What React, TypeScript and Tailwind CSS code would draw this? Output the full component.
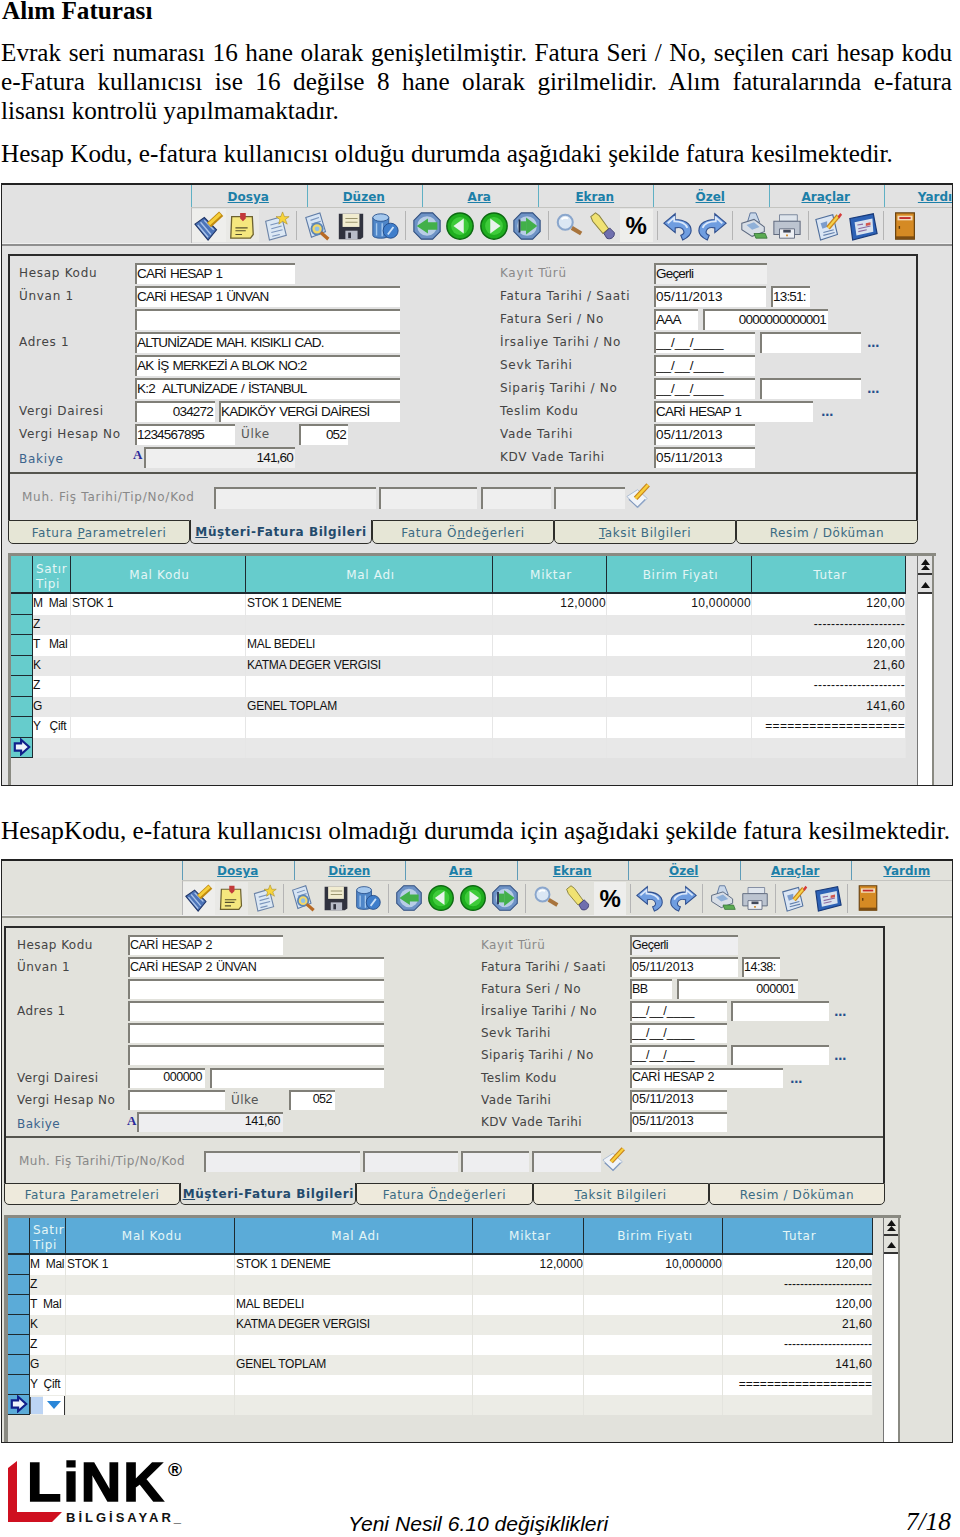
import React from "react";

type Field = { w: string; t?: string; right?: boolean; ro?: boolean; ml?: string };
type Row = { l: string; c?: string; f: Field[]; lead?: React.ReactNode; dots?: string; ulke?: string };

const Svg = ({ c, children }: { c: string; children: React.ReactNode }) => (
  <svg viewBox="0 0 32 32" className={c}>{children}</svg>
);

const icons: ((c: string) => React.ReactNode)[] = [
  // broom
  (c) => (
    <Svg c={c}>
      <path d="M1 14 L11 7 L24 20 L15 31 Z" fill="#4c74b8" stroke="#1f3569" strokeWidth="1.2" />
      <path d="M4 15 L15 28 M7 12 L18 25 M11 10 L21 20" stroke="#a9c3ea" strokeWidth="1.5" />
      <path d="M16 15 L29 3" stroke="#c08a10" strokeWidth="6.5" />
      <path d="M16 14 L28 3" stroke="#f6cf3a" strokeWidth="3.4" />
    </Svg>
  ),
  // note
  (c) => (
    <Svg c={c}>
      <path d="M5 6 H27 L28 25 L25 29 H4 Z" fill="#f5e77e" stroke="#6d6230" strokeWidth="1.4" />
      <path d="M14 2 H20 V8 L17 11 L14 8 Z" fill="#c23a3a" />
      <path d="M9 18 H22 M9 21 H20 M9 25 H16" stroke="#55502c" strokeWidth="1.2" />
    </Svg>
  ),
  // doc with star
  (c) => (
    <Svg c={c}>
      <path d="M5 11 L22 6 L27 26 L9 31 Z" fill="#dce8f4" stroke="#6c84a8" strokeWidth="1.2" />
      <path d="M10 15 L21 12 M11 19 L22 16 M11 23 L23 20 M12 27 L20 25" stroke="#7a94bc" strokeWidth="1.2" />
      <path d="M23 1 L25 6 L30 6 L26 9 L28 14 L23 11 L19 14 L20 9 L16 6 L21 6 Z" fill="#f7d43c" stroke="#a98a1c" strokeWidth="0.6" />
    </Svg>
  ),
  // doc + magnifier
  (c) => (
    <Svg c={c}>
      <path d="M3 7 L18 2 L24 22 L9 28 Z" fill="#d6e4f4" stroke="#5f7ca6" strokeWidth="1.2" />
      <path d="M8 10 L17 7 M9 14 L19 11" stroke="#7a94bc" strokeWidth="1.2" />
      <circle cx="15" cy="19" r="6" fill="#f2d768" stroke="#5b86b8" strokeWidth="2" />
      <circle cx="15" cy="19" r="2.6" fill="#8fc0e8" />
      <path d="M19 23 L27 30" stroke="#b86a24" strokeWidth="3.6" />
    </Svg>
  ),
  // floppy
  (c) => (
    <Svg c={c}>
      <path d="M3 3 H29 V28 L26 30 H3 Z" fill="#30323e" />
      <path d="M7 3 H25 V17 H7 Z" fill="#f1ecd0" />
      <path d="M10 8 H23 M10 12 H23" stroke="#9a946e" strokeWidth="1.2" />
      <path d="M10 21 H23 V30 H10 Z" fill="#b8bcc8" />
      <path d="M13 23 H16 V29 H13 Z" fill="#30323e" />
    </Svg>
  ),
  // database + shield
  (c) => (
    <Svg c={c}>
      <path d="M3 7 V26 C3 30 20 30 20 26 V7 Z" fill="#4f86c8" stroke="#2d558f" strokeWidth="1" />
      <ellipse cx="11.5" cy="7" rx="8.5" ry="4" fill="#a6c9ee" stroke="#2d558f" strokeWidth="1" />
      <path d="M7 13 V26 M13 13 V27" stroke="#a6c9ee" strokeWidth="1.5" />
      <circle cx="22" cy="21" r="8" fill="#3f7ecb" stroke="#234b88" strokeWidth="1" />
      <path d="M19 25 L25 17" stroke="#c9e0f8" strokeWidth="2" />
    </Svg>
  ),
  // first
  (c) => (
    <Svg c={c}>
      <path d="M10 2 H22 L30 10 V22 L22 30 H10 L2 22 V10 Z" fill="#6e93c6" stroke="#304f80" strokeWidth="1.2" />
      <circle cx="16" cy="16" r="10.5" fill="#b8cde6" />
      <path d="M5 16 L17 8 V12 H27 V20 H17 V24 Z" fill="#42b04a" />
    </Svg>
  ),
  // prev
  (c) => (
    <Svg c={c}>
      <circle cx="16" cy="16" r="14" fill="#1fae1f" stroke="#0d6a12" strokeWidth="1.6" />
      <circle cx="16" cy="16" r="9.5" fill="#3ecb3a" />
      <path d="M9 16 L20 8 V24 Z" fill="#e8f3ec" />
    </Svg>
  ),
  // next
  (c) => (
    <Svg c={c}>
      <circle cx="16" cy="16" r="14" fill="#1fae1f" stroke="#0d6a12" strokeWidth="1.6" />
      <circle cx="16" cy="16" r="9.5" fill="#3ecb3a" />
      <path d="M23 16 L12 8 V24 Z" fill="#e8f3ec" />
    </Svg>
  ),
  // last
  (c) => (
    <Svg c={c}>
      <path d="M10 2 H22 L30 10 V22 L22 30 H10 L2 22 V10 Z" fill="#6e93c6" stroke="#304f80" strokeWidth="1.2" />
      <circle cx="16" cy="16" r="10.5" fill="#b8cde6" />
      <path d="M27 16 L15 7 V25 Z" fill="#42b04a" />
      <path d="M9 11 H15 V21 H9 Z" fill="#42b04a" />
      <path d="M7 9 H9 V23 H7 Z" fill="#1e2c4a" />
    </Svg>
  ),
  // magnifier
  (c) => (
    <Svg c={c}>
      <circle cx="12" cy="12" r="8" fill="#dbe7f4" stroke="#8aa6cc" strokeWidth="2.2" />
      <path d="M8 9 C10 7 13 7 15 8" stroke="#fff" strokeWidth="2" fill="none" />
      <path d="M19 18 L29 24" stroke="#a8743c" strokeWidth="4.4" />
    </Svg>
  ),
  // flashlight
  (c) => (
    <Svg c={c}>
      <path d="M3 6 L8 2 L12 5 L22 19 L16 24 L5 11 Z" fill="#f0e272" stroke="#8c8440" strokeWidth="1.1" />
      <path d="M17 24 L23 18 L28 23 C29 28 24 31 20 29 Z" fill="#6f6fae" stroke="#3f3f72" strokeWidth="1" />
    </Svg>
  ),
  () => null,
  // undo
  (c) => (
    <Svg c={c}>
      <path d="M1 13 L13 3 V9 C22 9 30 13 30 21 C30 26 25 29 21 31 L19 26 C22 25 23 23 22 21 C21 18 17 17 13 18 V23 Z" fill="#6f9de0" stroke="#30508f" strokeWidth="1.2" />
      <path d="M5 13 L12 7 V11 C18 11 24 13 26 18" stroke="#dbe8fa" strokeWidth="2" fill="none" />
    </Svg>
  ),
  // redo
  (c) => (
    <Svg c={c}>
      <path d="M31 13 L19 3 V9 C10 9 2 13 2 21 C2 26 7 29 11 31 L13 26 C10 25 9 23 10 21 C11 18 15 17 19 18 V23 Z" fill="#6f9de0" stroke="#30508f" strokeWidth="1.2" />
      <path d="M27 13 L20 7 V11 C14 11 8 13 6 18" stroke="#dbe8fa" strokeWidth="2" fill="none" />
    </Svg>
  ),
  // printer with green
  (c) => (
    <Svg c={c}>
      <path d="M12 2 L18 2 L22 12 L9 12 Z" fill="#c9d8ea" stroke="#57719a" strokeWidth="1" />
      <path d="M3 13 L16 9 L27 17 L27 22 L14 27 L3 20 Z" fill="#d8dee6" stroke="#5d6a80" strokeWidth="1.1" />
      <path d="M8 15 L16 12 L22 17 L14 20 Z" fill="#8fb0d8" />
      <path d="M16 24 L28 24 L30 29 L18 29 Z" fill="#5bab52" stroke="#2f6e32" strokeWidth="0.8" />
    </Svg>
  ),
  // printer gray
  (c) => (
    <Svg c={c}>
      <path d="M8 4 L27 4 L27 11 L8 11 Z" fill="#dfe5ec" stroke="#79849a" strokeWidth="1" />
      <path d="M2 11 H30 V25 H2 Z" fill="#bcc4d0" stroke="#626c80" strokeWidth="1.1" />
      <path d="M8 19 H24 V29 H8 Z" fill="#eef0f4" stroke="#626c80" strokeWidth="1" />
      <path d="M12 20 H20 V23 H12 Z" fill="#41485a" />
      <path d="M15 25 H17 V27 H15 Z" fill="#d08a2a" />
    </Svg>
  ),
  // form with pencil
  (c) => (
    <Svg c={c}>
      <path d="M2 9 L20 4 L25 25 L7 31 Z" fill="#dbe6f4" stroke="#4f6e9c" strokeWidth="1.2" />
      <path d="M7 13 L14 11 V17 L9 19 Z" fill="#7c9ccc" />
      <path d="M10 23 L21 20 M10 26 L22 23" stroke="#6480ac" strokeWidth="1.2" />
      <path d="M15 18 L26 5" stroke="#c9841c" strokeWidth="5" />
      <path d="M15 18 L26 5" stroke="#f6d24a" strokeWidth="2.4" />
      <path d="M25 6 L28 2 L30 4 L27 8 Z" fill="#d43a3a" />
    </Svg>
  ),
  // blue box
  (c) => (
    <Svg c={c}>
      <path d="M2 8 L27 3 L31 24 L5 31 Z" fill="#2d62b6" stroke="#183a7a" strokeWidth="1.3" />
      <path d="M7 12 L26 8 L27 22 L9 26 Z" fill="#d8e2ee" />
      <path d="M10 15 L16 14 M11 19 L24 16 M11 22 L20 20" stroke="#8c6aa0" strokeWidth="1.2" />
      <path d="M19 13 L24 12 L24 15 L19 16 Z" fill="#d4564c" />
    </Svg>
  ),
  // door exit
  (c) => (
    <Svg c={c}>
      <path d="M6 2 H26 V30 H6 Z" fill="#d58a24" stroke="#6a4310" strokeWidth="1.3" />
      <path d="M8 5 H24 V10 H8 Z" fill="#f3dcb8" />
      <path d="M10 6.5 H22 V8.5 H10 Z" fill="#c22b2b" />
      <path d="M6 27 H26 V30 H6 Z" fill="#7c4d12" />
      <path d="M10 16 V19" stroke="#5e3a0c" strokeWidth="1.5" />
    </Svg>
  ),
];

const groups = [[0, 1, 2], [3, 4, 5], [6, 7, 8, 9], [10, 11, 12], [13, 14], [15, 16], [17, 18], [19]];
const menu = ["Dosya", "Düzen", "Ara", "Ekran", "Özel", "Araçlar", "Yardım"];

const Pencil = ({ c }: { c: string }) => (
  <svg viewBox="0 0 28 28" className={c}>
    <path d="M2 15 L13 8 L23 17 L13 27 Z" fill="#f1f4f8" stroke="#a9bad2" strokeWidth="1" />
    <path d="M4 18 L13 26 L21 18" fill="none" stroke="#7f97bd" strokeWidth="1.2" />
    <path d="M11 17 L24 3" stroke="#c8841c" strokeWidth="5" />
    <path d="M11 17 L24 3" stroke="#f8cf3c" strokeWidth="2.6" />
  </svg>
);

const Arrow = () => (
  <svg viewBox="0 0 20 20" className="w-[18px] h-[18px]">
    <path d="M2 6 H9 V2 L18 10 L9 18 V14 H2 Z" fill="#eef4fb" stroke="#10208a" strokeWidth="2.4" />
  </svg>
);

const isDate = (t?: string) => !!t && /^[\d_]+\/[\d_]+\/[\d_]+$/.test(t);

function Input({ f, b }: { f: Field; b: boolean }) {
  const track = isDate(f.t) ? "tracking-normal" : b ? "tracking-[-0.5px]" : "tracking-[-0.8px]";
  return (
    <div
      className={`${f.w} ${f.ml ?? ""} ${track} ${f.right ? "justify-end" : "justify-start"} ${
        f.ro ? (b ? "bg-[#eeeef0]" : "bg-[#efefef]") : "bg-white"
      } ${b ? "h-[20px] text-[12.5px] pb-[2px] pr-[3px]" : "h-[21px] text-[13.5px] pb-[2px] pr-[2px]"} [word-spacing:1px] flex items-center shrink-0 border-t-2 border-l-2 border-[#807f78] whitespace-pre overflow-hidden font-['Liberation_Sans',sans-serif] text-[#111]`}
    >
      {f.t}
    </div>
  );
}

function FormRow({ r, b, right }: { r: Row; b: boolean; right?: boolean }) {
  const lw = right ? (b ? "w-[149px]" : "w-[154px]") : b ? "w-[111px]" : "w-[116px]";
  const track = b ? "tracking-[0.45px]" : "tracking-[0.7px]";
  return (
    <div className={`flex items-start ${b ? "h-[22.1px]" : "h-[23px]"}`}>
      <div className={`${lw} ${r.c ?? "text-[#444]"} ${r.lead ? "mt-[3px]" : "mt-[1px]"} ${track} shrink-0 text-[12px] leading-[18px] whitespace-nowrap relative`}>
        {r.l}
        {r.lead}
      </div>
      {r.f.map((f, i) => (
        <React.Fragment key={i}>
          {r.ulke && i === 1 && (
            <span className={`${track} text-[12px] leading-[18px] text-[#555] ml-[6px] mt-[1px] w-[58px] shrink-0`}>{r.ulke}</span>
          )}
          <Input f={f} b={b} />
        </React.Fragment>
      ))}
      {r.dots && <span className={`${r.dots} text-[#23508c] text-[12px] font-bold leading-[22px] tracking-[-0.5px]`}>...</span>}
    </div>
  );
}

const Mark = ({ b }: { b: boolean }) => (
  <span
    className={`absolute ${b ? "left-[110px] top-[-3px]" : "left-[114px] top-[-4px]"} text-[13px] font-bold text-[#2a2a9a] font-['Liberation_Serif',serif]`}
  >
    A
  </span>
);

function Window({ b, left, right, muh, rows }: { b: boolean; left: Row[]; right: Row[]; muh: string[]; rows: string[][] }) {
  const cols = b ? "grid-cols-[22px_36px_169px_238px_111px_139px_150px]" : "grid-cols-[22px_38px_175px_247px_114px_145px_154px]";
  const headC = b ? "bg-[#5babd8]" : "bg-[#66cccc]";
  const alt = b ? "bg-[#ecece6]" : "bg-[#e8e8e8]";
  const rh = b ? "h-[20px]" : "h-[20.5px]";
  const iconC = b ? "w-[28px] h-[28px]" : "w-[30px] h-[30px]";
  const heads = ["", "Satır Tipi", "Mal Kodu", "Mal Adı", "Miktar", "Birim Fiyatı", "Tutar"];
  const tabs: [string, string, string, boolean][] = [
    ["Fatura ", "P", "arametreleri", false],
    ["", "M", "üşteri-Fatura Bilgileri", true],
    ["Fatura Ö", "n", "değerleri", false],
    ["", "T", "aksit Bilgileri", false],
    ["Resim / Döküman", "", "", false],
  ];
  return (
    <div
      className={`${b ? "h-[584px] bg-[#e2e2dc]" : "h-[603px] bg-[#e2e2e2]"} ml-[1px] w-[952px] overflow-hidden border-t-2 border-l border-r border-b border-[#222] font-['DejaVu_Sans',sans-serif]`}
    >
      <div className={`flex border-b border-[#c4c4c0] ${b ? "h-[20px] ml-[180px]" : "h-[23px] ml-[189px]"}`}>
        {menu.map((m) => (
          <div
            key={m}
            className={`${b ? "w-[111.5px] border-[#5e9cb8] leading-[21px] pr-[1px]" : "w-[115.5px] border-[#5fb0c4] leading-[25px] pr-[2px]"} shrink-0 border-l-[1.5px] text-center text-[12px] font-bold underline whitespace-nowrap text-[#1c7fa8] overflow-hidden`}
          >
            {m}
          </div>
        ))}
      </div>
      <div className={`flex items-center border-l border-[#b8b8b8] ${b ? "h-[34px] ml-[180px]" : "h-[35px] ml-[189px]"}`}>
        {groups.map((g, gi) => (
          <React.Fragment key={gi}>
            {gi > 0 && <div className={`${b ? "mx-[3.5px]" : "mx-[3.75px]"} w-[1px] h-[29px] bg-[#b4b4b4] shrink-0`} />}
            {g.map((i) => {
              const lit = i === 0 || i === 1 || i === 12;
              return (
                <div
                  key={i}
                  className={`${b ? "w-[32.25px]" : "w-[33.5px]"} h-[33px] shrink-0 flex items-center justify-center ${lit ? (i === 1 ? "bg-[#e9e9e6]" : "bg-[#eeeeec]") : ""}`}
                >
                  {i === 12 ? (
                    <span className="text-[24px] font-bold text-black font-['Liberation_Sans',sans-serif]">%</span>
                  ) : (
                    icons[i](iconC)
                  )}
                </div>
              );
            })}
          </React.Fragment>
        ))}
      </div>
      <div className={`border-b-2 border-t border-t-[#efefef] h-[3px] ${b ? "border-[#9a9a92]" : "border-[#8f8f8f]"}`} />

      {/* form */}
      <div className={`${b ? "ml-[2px] w-[881px]" : "ml-[6px] w-[910px]"} mt-[8px] border-t-2 border-l-2 border-r-2 border-[#2a2a2a]`}>
        <div className="flex pt-[7px]">
          <div className={`${b ? "w-[475px] pl-[11px]" : "w-[490px] pl-[9px]"} shrink-0`}>
            {left.map((r, i) => (
              <FormRow key={i} r={r} b={b} />
            ))}
          </div>
          <div>
            {right.map((r, i) => (
              <FormRow key={i} r={r} b={b} right />
            ))}
          </div>
        </div>
        <div className="mt-[2px] border-t-2 border-[#55554f]" />
        <div className={`flex items-start pt-[13px] ${b ? "h-[45px] pl-[13px]" : "h-[46px] pl-[12px]"}`}>
          <div className={`${b ? "w-[185px] tracking-[0.5px]" : "w-[192px] tracking-[0.75px]"} shrink-0 text-[12px] leading-[20px] text-[#888] whitespace-nowrap`}>
            Muh. Fiş Tarihi/Tip/No/Kod
          </div>
          {muh.map((w, i) => (
            <div key={i} className={`${w} ${b ? "h-[21px] bg-[#eeeef0]" : "h-[22px] bg-[#efefef]"} shrink-0 border-t-2 border-l-2 border-[#807f78]`} />
          ))}
          <Pencil c={b ? "w-[26px] h-[26px] -mt-[5px]" : "w-[27px] h-[27px] -mt-[5px]"} />
        </div>
      </div>

      {/* tabs */}
      <div className={`flex ${b ? "ml-[2px] w-[881px] h-[22px]" : "ml-[6px] w-[910px] h-[24px]"} text-[12px] tracking-[0.6px]`}>
        {tabs.map(([a, u, z, on], i) => (
          <div
            key={i}
            className={`flex-1 flex items-center justify-center whitespace-nowrap border-x-[1.5px] border-b-[1.5px] border-[#2e2e2a] rounded-b-[5px] ${b ? "pt-[3px]" : "pt-[2px]"} ${
              on
                ? "font-bold text-[#234a6c] " + (b ? "bg-[#e2e2dc]" : "bg-[#e2e2e2]")
                : "text-[#3a6a82] border-t-[1.5px] " + (b ? "bg-[#eeeadc]" : "bg-[#e6e6d6]")
            }`}
          >
            <span className="whitespace-pre">
              {a}
              <u>{u}</u>
              {z}
            </span>
          </div>
        ))}
      </div>

      {/* grid */}
      <div className={`${b ? "ml-[2px] w-[897px] mt-[10px] border-l-4" : "ml-[6px] w-[928px] mt-[9px] border-l-[3px]"} flex border-t-[3px] border-[#8a8a82] h-[300px]`}>
        <div className="min-w-0">
          <div className={`grid ${cols}`}>
            {heads.map((h, i) => (
              <div
                key={i}
                className={`${headC} ${b ? "h-[37px]" : "h-[38px]"} tracking-[0.7px] border-r border-b-2 border-[#1e2a30] flex items-center text-[12px] text-[#e4f6f6] leading-[15px] ${
                  i === 1
                    ? b ? "text-left justify-start pl-[3px] pt-[6px]" : "text-left justify-start pl-[3px] pt-[5px]"
                    : b ? "justify-center pl-[4px] pt-[3px]" : "justify-center pl-[3px] pt-[3px]"
                }`}
              >
                {i === 1 ? (
                  <span>
                    Satır
                    <br />
                    Tipi
                  </span>
                ) : (
                  h
                )}
              </div>
            ))}
          </div>
          {rows.map((r, ri) => (
            <div key={ri} className={`grid ${cols} ${rh}`}>
              <div className={`${headC} border-r border-b border-[#1e2a30] flex items-center justify-center`}>
                {ri === 7 && <Arrow />}
              </div>
              {r.map((t, ci) => (
                <div
                  key={ci}
                  className={`${ri % 2 ? alt : "bg-white"} border-r ${b ? "border-[#e4e4de]" : "border-[#e6e6e6]"} ${
                    ci >= 3 ? (b ? "justify-end" : "justify-end tracking-[0.35px]") : ci === 0 ? "tracking-[-0.3px]" : "pl-[1px] tracking-[-0.2px]"
                  } flex items-start pt-[1px] leading-[16px] text-[12px] text-[#111] font-['Liberation_Sans',sans-serif] whitespace-pre overflow-hidden`}
                >
                  {ci === 0 && ri === 7 && b ? (
                    <span className="flex h-[19px] w-full">
                      <span className="w-[13px] h-[17px] mt-[1px] bg-[#bcd4f4] border-l border-[#555]" />
                      <span className="flex-1 flex items-center justify-center bg-white border-r border-[#333]">
                        <svg viewBox="0 0 14 8" className="w-[14px] h-[8px]">
                          <path d="M0 0 H14 L7 8 Z" fill="#2a86d8" />
                        </svg>
                      </span>
                    </span>
                  ) : (
                    t
                  )}
                </div>
              ))}
            </div>
          ))}
        </div>
        <div className={`${b ? "ml-[10px] w-[17px]" : "ml-[11px] w-[17px]"} h-full shrink-0 bg-white border-l border-[#777] border-r-2 border-r-[#8a8a82]`}>
          {["M2 7 L6.5 1 L11 7 Z M2 12 L6.5 7 L11 12 Z", "M2 11 L6.5 5 L11 11 Z"].map((d, i) => (
            <div key={i} className={`${b ? "bg-[#e2e2dc] h-[18px]" : "bg-[#e2e2e2] h-[19px]"} flex items-center justify-center border-b-2 border-[#333]`}>
              <svg viewBox="0 0 13 14" className="w-[13px] h-[14px]">
                <path d={d} fill="#111" />
              </svg>
            </div>
          ))}
        </div>
      </div>
    </div>
  );
}

const commonRows = (f: string, eq: string, tm: string, yc: string): string[][] => [
  ["M  Mal", "STOK 1", "STOK 1 DENEME", "12,0000", "10,000000", "120,00"],
  ["Z", "", "", "", "", f],
  [tm, "", "MAL BEDELI", "", "", "120,00"],
  ["K", "", "KATMA DEGER VERGISI", "", "", "21,60"],
  ["Z", "", "", "", "", f],
  ["G", "", "GENEL TOPLAM", "", "", "141,60"],
  [yc, "", "", "", "", eq],
  ["", "", "", "", "", ""],
];

const blue = "text-[#3c648c]";
const gray = "text-[#8a8a8a]";

const left1: Row[] = [
  { l: "Hesap Kodu", f: [{ w: "w-[160px]", t: "CARİ HESAP 1" }] },
  { l: "Ünvan 1", f: [{ w: "w-[265px]", t: "CARİ HESAP 1 ÜNVAN" }] },
  { l: "", f: [{ w: "w-[265px]" }] },
  { l: "Adres 1", f: [{ w: "w-[265px]", t: "ALTUNİZADE MAH. KISIKLI CAD." }] },
  { l: "", f: [{ w: "w-[265px]", t: "AK İŞ MERKEZİ A BLOK NO:2" }] },
  { l: "", f: [{ w: "w-[265px]", t: "K:2  ALTUNİZADE / İSTANBUL" }] },
  { l: "Vergi Dairesi", f: [{ w: "w-[80px]", t: "034272", right: true }, { w: "w-[181px]", ml: "ml-[4px]", t: "KADIKÖY VERGİ DAİRESİ" }] },
  { l: "Vergi Hesap No", ulke: "Ülke", f: [{ w: "w-[100px]", t: "1234567895" }, { w: "w-[49px]", t: "052", right: true }] },
  { l: "Bakiye", c: blue, lead: <Mark b={false} />, f: [{ w: "w-[151px]", ml: "ml-[9px]", t: "141,60", right: true, ro: true }] },
];
const right1: Row[] = [
  { l: "Kayıt Türü", c: gray, f: [{ w: "w-[113px]", t: "Geçerli", ro: true }] },
  { l: "Fatura Tarihi / Saati", f: [{ w: "w-[112px]", t: "05/11/2013" }, { w: "w-[39px]", ml: "ml-[5px]", t: "13:51:" }] },
  { l: "Fatura Seri / No", f: [{ w: "w-[44px]", t: "AAA" }, { w: "w-[125px]", ml: "ml-[5px]", t: "0000000000001", right: true }] },
  { l: "İrsaliye Tarihi / No", dots: "ml-[6px]", f: [{ w: "w-[101px]", t: "__/__/____" }, { w: "w-[101px]", ml: "ml-[5px]" }] },
  { l: "Sevk Tarihi", f: [{ w: "w-[101px]", t: "__/__/____" }] },
  { l: "Sipariş Tarihi / No", dots: "ml-[6px]", f: [{ w: "w-[101px]", t: "__/__/____" }, { w: "w-[101px]", ml: "ml-[5px]" }] },
  { l: "Teslim Kodu", dots: "ml-[8px]", f: [{ w: "w-[159px]", t: "CARİ HESAP 1" }] },
  { l: "Vade Tarihi", f: [{ w: "w-[101px]", t: "05/11/2013" }] },
  { l: "KDV Vade Tarihi", f: [{ w: "w-[101px]", t: "05/11/2013" }] },
];
const left2: Row[] = [
  { l: "Hesap Kodu", f: [{ w: "w-[155px]", t: "CARİ HESAP 2" }] },
  { l: "Ünvan 1", f: [{ w: "w-[256px]", t: "CARİ HESAP 2 ÜNVAN" }] },
  { l: "", f: [{ w: "w-[256px]" }] },
  { l: "Adres 1", f: [{ w: "w-[256px]" }] },
  { l: "", f: [{ w: "w-[256px]" }] },
  { l: "", f: [{ w: "w-[256px]" }] },
  { l: "Vergi Dairesi", f: [{ w: "w-[77px]", t: "000000", right: true }, { w: "w-[174px]", ml: "ml-[5px]" }] },
  { l: "Vergi Hesap No", ulke: "Ülke", f: [{ w: "w-[97px]" }, { w: "w-[46px]", t: "052", right: true }] },
  { l: "Bakiye", c: blue, lead: <Mark b={true} />, f: [{ w: "w-[146px]", ml: "ml-[9px]", t: "141,60", right: true, ro: true }] },
];
const right2: Row[] = [
  { l: "Kayıt Türü", c: gray, f: [{ w: "w-[108px]", t: "Geçerli", ro: true }] },
  { l: "Fatura Tarihi / Saati", f: [{ w: "w-[108px]", t: "05/11/2013" }, { w: "w-[38px]", ml: "ml-[4px]", t: "14:38:" }] },
  { l: "Fatura Seri / No", f: [{ w: "w-[42px]", t: "BB" }, { w: "w-[121px]", ml: "ml-[5px]", t: "000001", right: true }] },
  { l: "İrsaliye Tarihi / No", dots: "ml-[5px]", f: [{ w: "w-[97px]", t: "__/__/____" }, { w: "w-[98px]", ml: "ml-[4px]" }] },
  { l: "Sevk Tarihi", f: [{ w: "w-[97px]", t: "__/__/____" }] },
  { l: "Sipariş Tarihi / No", dots: "ml-[5px]", f: [{ w: "w-[97px]", t: "__/__/____" }, { w: "w-[98px]", ml: "ml-[4px]" }] },
  { l: "Teslim Kodu", dots: "ml-[7px]", f: [{ w: "w-[153px]", t: "CARİ HESAP 2" }] },
  { l: "Vade Tarihi", f: [{ w: "w-[97px]", t: "05/11/2013" }] },
  { l: "KDV Vade Tarihi", f: [{ w: "w-[97px]", t: "05/11/2013" }] },
];

const rows1 = commonRows("---------------------", "===================", "T   Mal", "Y   Çift");
const rows2 = commonRows("----------------------", "===================", "T  Mal", "Y  Çift");

export default function App() {
  return (
    <div className="w-[960px] h-[1537px] overflow-hidden bg-white text-black font-['Liberation_Serif',serif] text-[25.2px] leading-[29px]">
      <div className="h-[22px] pl-[2px] font-bold leading-[22px]">Alım Faturası</div>
      <div className="mt-[16px] w-[951px] ml-[1px]">
        <div className="[text-align-last:justify]">Evrak seri numarası 16 hane olarak genişletilmiştir. Fatura Seri / No, seçilen cari hesap kodu</div>
        <div className="[text-align-last:justify]">e-Fatura kullanıcısı ise 16 değilse 8 hane olarak girilmelidir. Alım faturalarında e-fatura</div>
        <div>lisansı kontrolü yapılmamaktadır.</div>
      </div>
      <div className="mt-[14px] ml-[1px]">Hesap Kodu, e-fatura kullanıcısı olduğu durumda aşağıdaki şekilde fatura kesilmektedir.</div>
      <div className="mt-[15px]">
        <Window b={false} left={left1} right={right1} muh={["w-[162px]", "w-[98px] ml-[3px]", "w-[70px] ml-[4px]", "w-[71px] ml-[3px]"]} rows={rows1} />
      </div>
      <div className="mt-[30px] ml-[1px] whitespace-nowrap">HesapKodu, e-fatura kullanıcısı olmadığı durumda için aşağıdaki şekilde fatura kesilmektedir.</div>
      <div className="mt-[14px]">
        <Window b={true} left={left2} right={right2} muh={["w-[156px]", "w-[95px] ml-[3px]", "w-[68px] ml-[3px]", "w-[69px] ml-[3px]"]} rows={rows2} />
      </div>
      <div className="mt-[17px] flex items-end h-[77px] pl-[8px]">
        <svg viewBox="0 0 176 66" className="w-[176px] h-[66px] self-start shrink-0 overflow-visible">
          <path d="M0 8 L9 1 V52 H54 L44 62 H0 Z" fill="#cf1020" />
          <text x="19" y="41" fontFamily="Liberation Sans" fontWeight="700" fontSize="56" letterSpacing="2" stroke="#000" strokeWidth="1.6" fill="#000">LiNK</text>
          <text x="160" y="16" fontFamily="Liberation Sans" fontWeight="700" fontSize="19" fill="#000">®</text>
          <text x="58" y="62" fontFamily="Liberation Sans" fontWeight="700" fontSize="13" letterSpacing="3" fill="#111">BİLGİSAYAR_</text>
        </svg>
        <div className="ml-[164px] text-[21.1px] leading-[26px] italic font-['Liberation_Sans',sans-serif] whitespace-nowrap">Yeni Nesil 6.10 değişiklikleri</div>
        <div className="ml-auto pr-[9px] text-[25.5px] leading-[30px] italic font-['Liberation_Serif',serif]">7/18</div>
      </div>
    </div>
  );
}
